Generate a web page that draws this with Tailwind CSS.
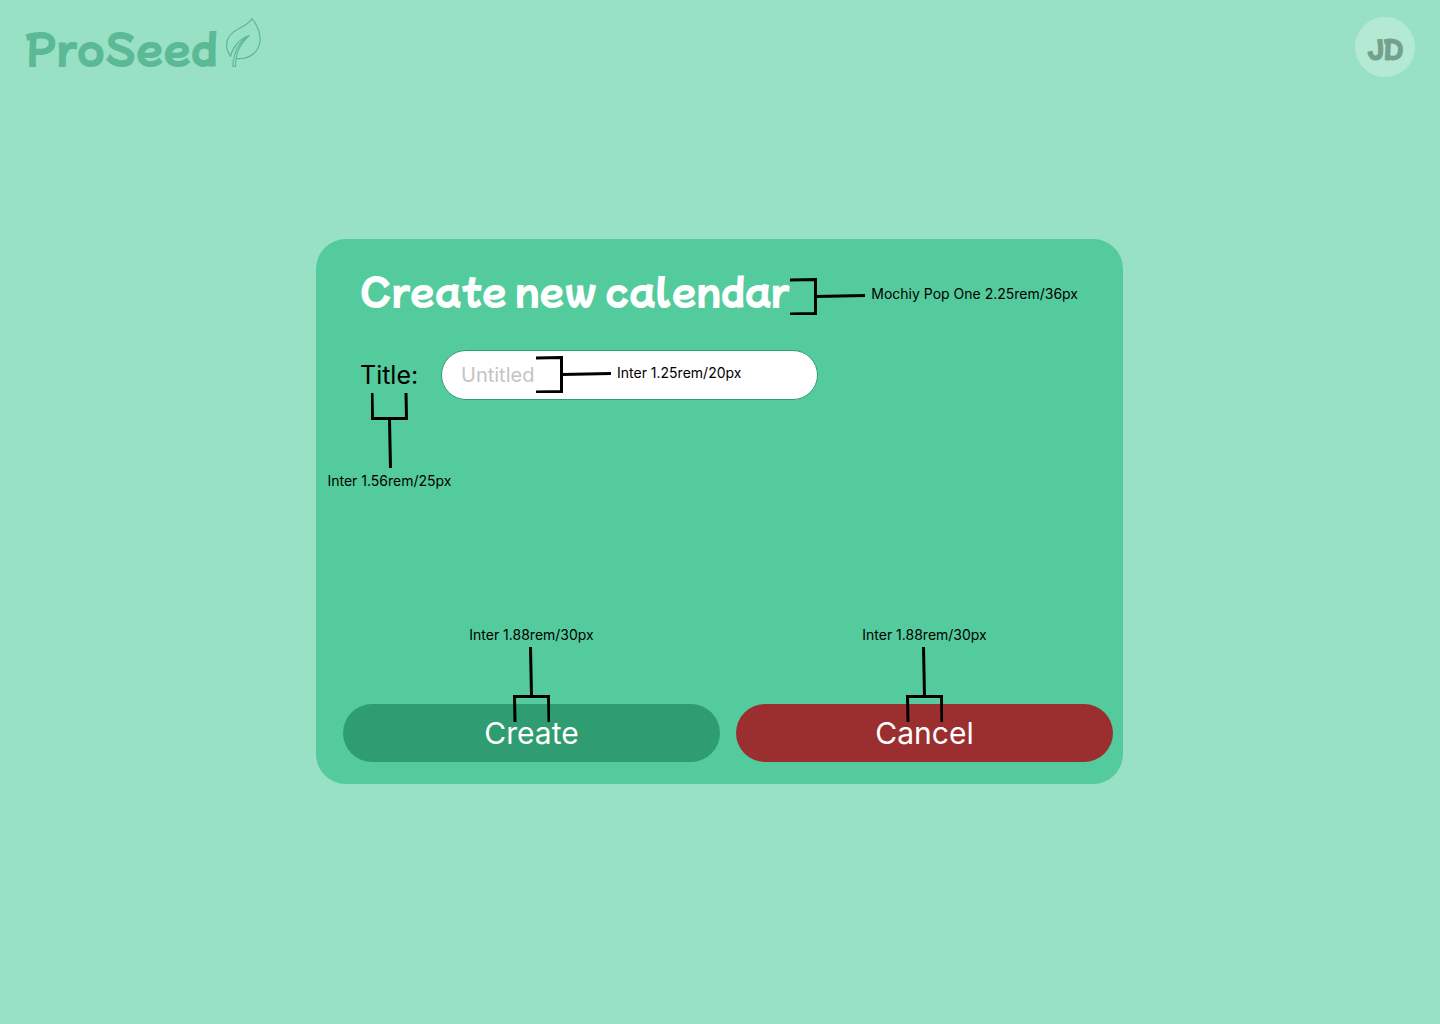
<!DOCTYPE html>
<html lang="en">
<head>
<meta charset="utf-8">
<meta name="viewport" content="width=device-width, initial-scale=1">
<title>ProSeed – Create new calendar</title>
<script src="https://cdn.jsdelivr.net/npm/@tailwindcss/browser@4"></script>
</head>
<body class="flex min-h-screen flex-col bg-[#98e1c4] font-['Inter',sans-serif] text-black">
  <header class="flex h-[94px] items-center justify-between pr-[25px] pl-6">
    <a href="#" class="flex items-center gap-[7px] text-[#5cb995]">
      <span class="font-['Mochiy_Pop_One','Lato',sans-serif] text-[40px] leading-[60px]">ProSeed</span>
      <svg class="mb-2.5 h-[51px] w-[38px]" viewBox="0 0 38 51" fill="none" stroke="currentColor" stroke-width="1.2" stroke-linejoin="round" aria-hidden="true">
        <path d="M27 1.5C25 6 20 8.500 14 11.500C5 16 1.500 21 1.500 28C1.500 33 3.500 36 5.500 39.500C7 32 14 22 24 18.500C14 25 8.500 35 7.800 49.300H10.400C10.500 46 10.700 44 11.200 41.500C24 43 34 35 35 24C36 15 31 7 27 1.500Z"/>
        <path d="M24 18.500C17 25 12 33 11.200 41.500"/>
      </svg>
    </a>
    <button type="button" aria-label="Account" class="flex size-[60px] items-center justify-center rounded-full bg-[#b4ead3] pt-0.5 font-['Mochiy_Pop_One','Lato',sans-serif] text-2xl font-bold text-[#76a08e]">JD</button>
  </header>

  <main class="flex flex-1 items-center justify-center pr-px pb-[95px]">
    <form class="flex min-h-[545px] w-full max-w-[807px] flex-col rounded-[30px] bg-[#54cb9d] pt-[25px] pr-[10px] pb-[22px] pl-[27px]">
      <div class="flex h-16 items-center pl-[17px]">
        <h1 class="pb-3.5 font-['Mochiy_Pop_One','Lato',sans-serif] text-4xl leading-[48px] whitespace-nowrap text-white">Create new calendar</h1>
        <svg class="ml-px h-[37px] w-[75px] shrink-0" viewBox="0 0 75 37" fill="none" stroke="#000" stroke-width="3" aria-hidden="true">
          <path d="M0 2L25.500 1.500V35.500L0 36M26 18.500L75 17.500"/>
        </svg>
        <span class="mb-1 ml-1.5 text-sm whitespace-nowrap">Mochiy Pop One 2.25rem/36px</span>
      </div>

      <div class="mt-[22px] flex items-center pl-[17px]">
        <div class="relative w-[81px]">
          <label for="title" class="text-[25px] leading-[50px]">Title:</label>
          <div class="absolute top-[43px] -left-[33px] flex w-[125px] flex-col items-center">
            <svg class="h-[75px] w-[37px]" viewBox="0 0 37 75" fill="none" stroke="#000" stroke-width="3" aria-hidden="true">
              <path d="M1 0L1.500 25.500H35.500L35 0M18.500 26L19.500 75"/>
            </svg>
            <span class="mt-[3px] text-sm whitespace-nowrap">Inter 1.56rem/25px</span>
          </div>
        </div>
        <div class="relative w-[377px]">
          <input id="title" type="text" placeholder="Untitled" class="block h-[50px] w-full rounded-full border border-[#2f9c72] bg-white pl-[19px] text-xl placeholder:text-[#c4c4c4]">
          <div class="pointer-events-none absolute top-1.5 left-[95px] flex items-center">
            <svg class="h-[37px] w-[75px]" viewBox="0 0 75 37" fill="none" stroke="#000" stroke-width="3" aria-hidden="true">
              <path d="M0 2L25.500 1.500V35.500L0 36M26 18.500L75 17.500"/>
            </svg>
            <span class="mb-1 ml-1.5 text-sm whitespace-nowrap">Inter 1.25rem/20px</span>
          </div>
        </div>
      </div>

      <div class="mt-auto grid grid-cols-2 gap-4">
        <div class="relative">
          <button type="submit" class="block h-[58px] w-full rounded-full bg-[#2f9c72] text-[30px] text-white">Create</button>
          <div class="pointer-events-none absolute inset-x-0 bottom-10 flex flex-col items-center">
            <span class="mb-0.5 text-sm">Inter 1.88rem/30px</span>
            <svg class="h-[75px] w-[37px]" viewBox="0 0 37 75" fill="none" stroke="#000" stroke-width="3" aria-hidden="true">
              <path d="M17.500 0L18.500 49M2 75L1.500 49.500H35.500L36 75"/>
            </svg>
          </div>
        </div>
        <div class="relative">
          <button type="button" class="block h-[58px] w-full rounded-full bg-[#9b2f2f] text-[30px] text-white">Cancel</button>
          <div class="pointer-events-none absolute inset-x-0 bottom-10 flex flex-col items-center">
            <span class="mb-0.5 text-sm">Inter 1.88rem/30px</span>
            <svg class="h-[75px] w-[37px]" viewBox="0 0 37 75" fill="none" stroke="#000" stroke-width="3" aria-hidden="true">
              <path d="M17.500 0L18.500 49M2 75L1.500 49.500H35.500L36 75"/>
            </svg>
          </div>
        </div>
      </div>
    </form>
  </main>
</body>
</html>
